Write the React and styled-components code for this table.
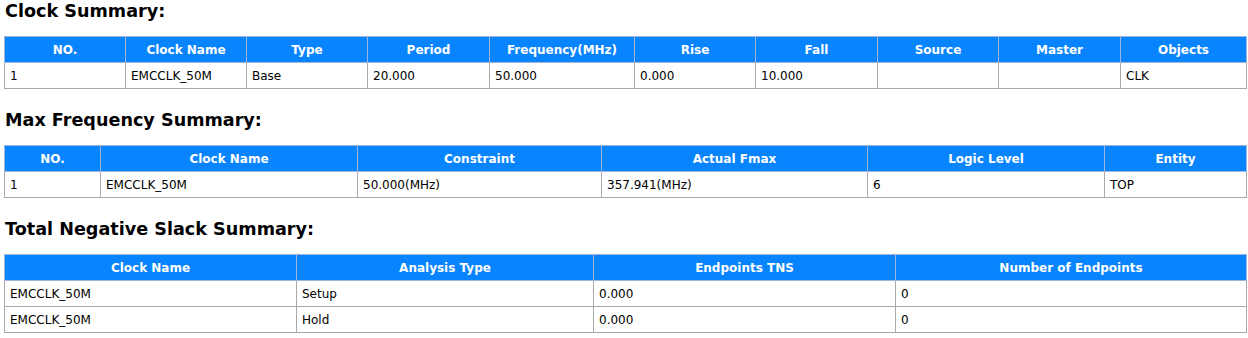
import { createGlobalStyle } from "styled-components";
import styled from "styled-components";

const GlobalS = createGlobalStyle`
  body {
    margin: 0;
    background: #ffffff;
    font-family: "DejaVu Sans", Verdana, sans-serif;
    color: #000000;
  }
`;

const clockCols = [121, 121, 121, 122, 145, 121, 122, 121, 122, 126];
const clockHead = [
  "NO.",
  "Clock Name",
  "Type",
  "Period",
  "Frequency(MHz)",
  "Rise",
  "Fall",
  "Source",
  "Master",
  "Objects",
];
const clockRows = [
  ["1", "EMCCLK_50M", "Base", "20.000", "50.000", "0.000", "10.000", "", "", "CLK"],
];

const fmaxCols = [96, 257, 244, 266, 237, 142];
const fmaxHead = ["NO.", "Clock Name", "Constraint", "Actual Fmax", "Logic Level", "Entity"];
const fmaxRows = [["1", "EMCCLK_50M", "50.000(MHz)", "357.941(MHz)", "6", "TOP"]];

const tnsCols = [292, 297, 302, 351];
const tnsHead = ["Clock Name", "Analysis Type", "Endpoints TNS", "Number of Endpoints"];
const tnsRows = [
  ["EMCCLK_50M", "Setup", "0.000", "0"],
  ["EMCCLK_50M", "Hold", "0.000", "0"],
];

function Summary({ title, cols, head, rows }) {
  return (
    <SectionS>
      <TitleS>{title}</TitleS>
      <TableS>
        <colgroup>
          {cols.map((w, i) => (
            <ColS key={i} $w={w} />
          ))}
        </colgroup>
        <thead>
          <tr>
            {head.map((h) => (
              <ThS key={h}>{h}</ThS>
            ))}
          </tr>
        </thead>
        <tbody>
          {rows.map((r, i) => (
            <tr key={i}>
              {r.map((c, j) => (
                <TdS key={j}>{c}</TdS>
              ))}
            </tr>
          ))}
        </tbody>
      </TableS>
    </SectionS>
  );
}

export default function App() {
  return (
    <PageS>
      <GlobalS />
      <Summary title="Clock Summary:" cols={clockCols} head={clockHead} rows={clockRows} />
      <Summary title="Max Frequency Summary:" cols={fmaxCols} head={fmaxHead} rows={fmaxRows} />
      <Summary
        title="Total Negative Slack Summary:"
        cols={tnsCols}
        head={tnsHead}
        rows={tnsRows}
      />
    </PageS>
  );
}

const PageS = styled.div`
  padding: 0 2px 0 4px;
  display: flex;
  flex-direction: column;
  gap: 20px;
`;

const SectionS = styled.section`
  display: flex;
  flex-direction: column;
  gap: 14px;
`;

const TitleS = styled.h3`
  margin: 0;
  padding-left: 1px;
  height: 22px;
  line-height: 23px;
  font-size: 17.6px;
  font-weight: bold;
  color: #000000;
`;

const TableS = styled.table`
  width: 1242px;
  table-layout: fixed;
  border-collapse: collapse;
  border: 1px solid #a9a9a9;
`;

const ColS = styled.col`
  width: ${(p) => p.$w}px;
`;

const ThS = styled.th`
  height: 25px;
  padding: 0 5px;
  background: #0884ff;
  color: #ffffff;
  font-size: 12px;
  font-weight: bold;
  text-align: center;
  border: 1px solid #a3b4d8;
  white-space: nowrap;
`;

const TdS = styled.td`
  height: 25px;
  padding: 0 5px;
  font-size: 12px;
  text-align: left;
  border: 1px solid #a9a9a9;
  white-space: nowrap;
`;
